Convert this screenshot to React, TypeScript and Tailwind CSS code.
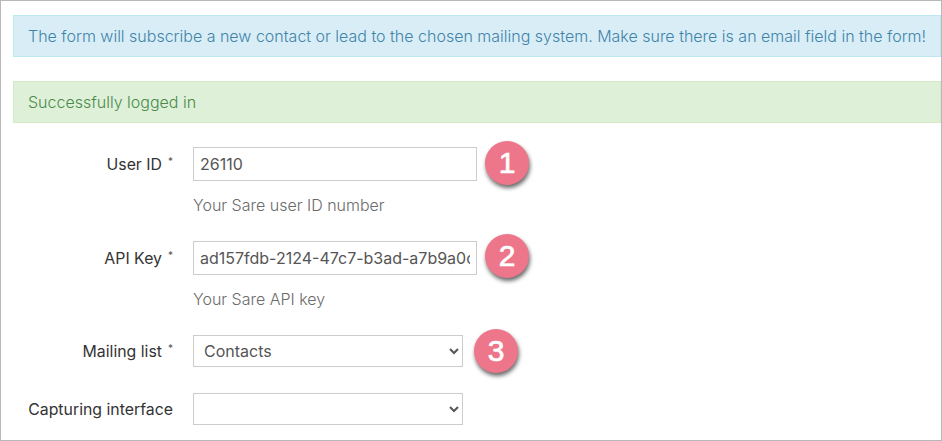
const fieldClass =
  "h-full border border-[#cccccc] bg-white text-[16px] text-[#555555] outline-none";

const Badge = ({ n, className }: { n: number; className: string }) => (
  <div
    className={`flex h-[44px] w-[44px] shrink-0 items-center justify-center rounded-full bg-[#ee768a] font-['Liberation_Sans',sans-serif] text-[30px] font-normal leading-none text-white shadow-[1px_3px_4px_rgba(0,0,0,0.6)] [-webkit-text-stroke:0.7px_white] ${className}`}
  >
    {n}
  </div>
);

const Label = ({ text, required }: { text: string; required?: boolean }) => (
  <label className="w-[160px] shrink-0 pt-[2px] text-right text-[15.85px] text-[#333333]">
    {text}
    {required && (
      <sup className="ml-[6px] text-[10px] text-[#555555]">*</sup>
    )}
  </label>
);

const Help = ({ text }: { text: string }) => (
  <p className="ml-[180px] mt-[15px] text-[16px] font-light leading-[19px] text-[#6b6b6b]">
    {text}
  </p>
);

export default function App() {
  return (
    <div className="h-[441px] w-[942px] overflow-hidden border border-[#b8b8b8] bg-white pl-3 pt-[14px] font-['Inter',sans-serif]">
      <div className="flex h-[42px] items-center border border-[#bce8f1] bg-[#d9edf7] pl-[14px] text-[16px] font-light text-[#3f84a8]">
        The form will subscribe a new contact or lead to the chosen mailing system. Make sure there is an email field in the form!
      </div>
      <div className="mt-6 flex h-[42px] items-center border border-[#d6e9c6] bg-[#dff0d8] pl-[14px] text-[16px] font-light text-[#4a8a4c]">
        Successfully logged in
      </div>

      <div className="mt-6 flex h-[34px] items-center gap-[20px]">
        <Label text="User ID" required />
        <div className="flex h-full items-center">
          <input
            className={`${fieldClass} w-[284px] px-[6px]`}
            defaultValue="26110"
            type="text"
          />
          <Badge className="-mt-[2px] ml-2" n={1} />
        </div>
      </div>
      <Help text="Your Sare user ID number" />

      <div className="mt-[26px] flex h-[34px] items-center gap-[20px]">
        <Label text="API Key" required />
        <div className="flex h-full items-center">
          <input
            className={`${fieldClass} w-[284px] px-[6px]`}
            defaultValue="ad157fdb-2124-47c7-b3ad-a7b9a0c0d1e2"
            type="text"
          />
          <Badge className="-mt-[4px] ml-2" n={2} />
        </div>
      </div>
      <Help text="Your Sare API key" />

      <div className="mt-[26px] flex h-[32px] items-center gap-[20px]">
        <Label text="Mailing list" required />
        <div className="flex h-full items-center">
          <select className={`${fieldClass} w-[270px] px-[6px]`} defaultValue="Contacts">
            <option>Contacts</option>
          </select>
          <Badge className="ml-[11px]" n={3} />
        </div>
      </div>

      <div className="mt-[26px] flex h-[32px] items-center gap-[20px]">
        <Label text="Capturing interface" />
        <div className="flex h-full items-center">
          <select className={`${fieldClass} w-[270px] px-[6px]`}>
            <option />
          </select>
        </div>
      </div>
    </div>
  );
}
